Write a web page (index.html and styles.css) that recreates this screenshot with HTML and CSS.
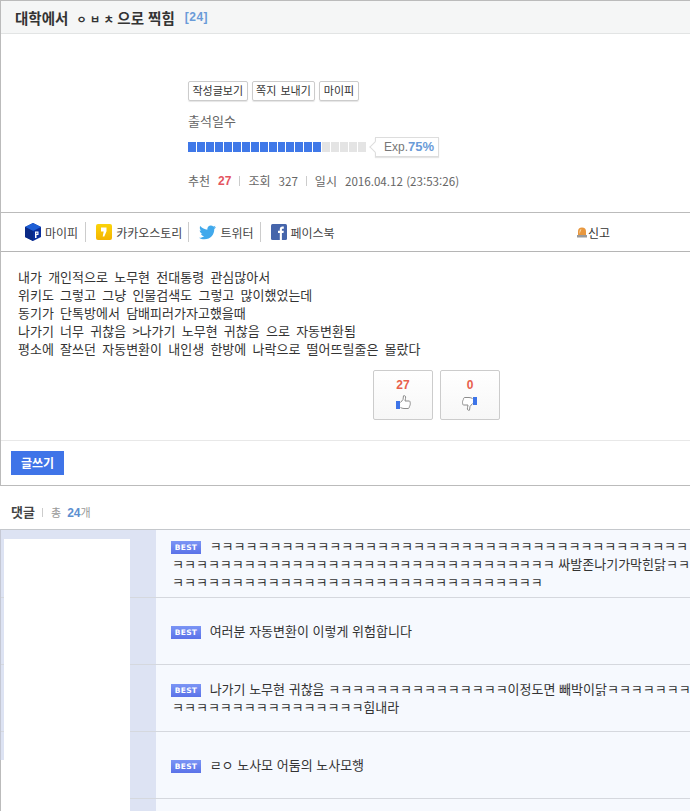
FILE: index.html
```html
<!DOCTYPE html>
<html lang="ko">
<head>
    <meta charset="UTF-8">
    <meta name="viewport" content="width=device-width, initial-scale=1.0">
    <title>대학에서 ㅇㅂㅊ으로 찍힘</title>
    <link rel="stylesheet" href="styles.css">
</head>
<body>
    <div class="post">
        <div class="post-title">
            <h1>대학에서 <span class="jamo">ㅇㅂㅊ</span>으로 찍힘</h1>
            <span class="title-count">[24]</span>
        </div>

        <div class="profile">
            <div class="profile-buttons">
                <a class="small-btn">작성글보기</a>
                <a class="small-btn">쪽지 보내기</a>
                <a class="small-btn">마이피</a>
            </div>
            <div class="attend">출석일수</div>
            <div class="exp-row">
                <div class="exp-bar">
                    <span class="on"></span><span class="on"></span><span class="on"></span><span class="on"></span><span class="on"></span>
                    <span class="on"></span><span class="on"></span><span class="on"></span><span class="on"></span><span class="on"></span>
                    <span class="on"></span><span class="on"></span><span class="on"></span><span class="on"></span><span class="on"></span>
                    <span></span><span></span><span></span><span></span><span></span>
                </div>
                <div class="exp-tip">Exp.<b>75%</b></div>
            </div>
            <div class="post-info">
                <span>추천</span><b class="red">27</b><i></i>
                <span>조회</span><span class="num">327</span><i></i>
                <span>일시</span><span class="num">2016.04.12 (23:53:26)</span>
            </div>
        </div>

        <div class="share-bar">
            <a class="share-item">
                <svg width="16" height="18" viewBox="0 0 16 18"><path d="M8 0l8 4v10l-8 4-8-4V4z" fill="#0a2f9c"/><path d="M8 0l8 4-8 4-8-4z" fill="#1e5fd6"/><path d="M8 8v10l-8-4V4z" fill="#0a2a86"/><path d="M10 8.500h3.500V12h-2v3H10z" fill="#fff"/><rect x="11.300" y="9.700" width="1" height="1.200" fill="#0a2f9c"/></svg>
                마이피
            </a>
            <a class="share-item">
                <svg width="16" height="16" viewBox="0 0 16 16"><defs><linearGradient id="kakaoFill" x1="0" y1="0" x2="0" y2="1"><stop offset="0" stop-color="#fbd40a"/><stop offset="1" stop-color="#f4b400"/></linearGradient></defs><rect width="16" height="16" rx="2" fill="url(#kakaoFill)"/><path d="M5 3.500h5.500v3.800L8.300 12.500H6.700l1-5H5z" fill="#fff"/></svg>
                카카오스토리
            </a>
            <a class="share-item">
                <svg width="17" height="15" viewBox="0 0 18 16"><path d="M18 2.200c-.7.300-1.400.5-2.100.6.800-.5 1.300-1.200 1.600-2-.7.400-1.500.7-2.300.9C14.500 1 13.600.5 12.500.5c-2 0-3.700 1.700-3.700 3.700 0 .3 0 .6.100.8C5.900 4.900 3.200 3.400 1.300 1.100.9 1.700.8 2.300.8 3c0 1.300.6 2.400 1.600 3.100-.6 0-1.200-.2-1.700-.5 0 1.800 1.300 3.300 3 3.700-.6.200-1.100.2-1.700.1.500 1.500 1.800 2.500 3.500 2.600C4 13.100 2 13.800 0 13.600c1.700 1.100 3.600 1.700 5.700 1.700 6.800 0 10.500-5.600 10.500-10.500v-.5c.7-.5 1.300-1.200 1.800-2.100z" fill="#41a9ec"/></svg>
                트위터
            </a>
            <a class="share-item">
                <svg width="16" height="16" viewBox="0 0 16 16"><rect width="16" height="16" rx="1.500" fill="#4565ab"/><path d="M8.800 16V9H7V6.700h1.800V5.200C8.800 3.400 9.900 2.500 11.400 2.500h1.400v2.200h-1c-.7 0-.9.400-.9.900v1.100h1.900L12.500 9h-1.600v7z" fill="#fff"/></svg>
                페이스북
            </a>
            <a class="report">
                <svg width="10" height="11" viewBox="0 0 10 11"><path d="M1 8V4.500a4 4 0 0 1 8 0V8z" fill="#e8973e"/><path d="M2.500 7V4.500A2.500 2.500 0 0 1 4.500 2z" fill="#f8d9a8"/><rect y="8" width="10" height="2.500" fill="#9a9a9a"/></svg>신고
            </a>
        </div>

        <div class="post-body">
            <p>내가 개인적으로 노무현 전대통령 관심많아서</p>
            <p>위키도 그렇고 그냥 인물검색도 그렇고 많이했었는데</p>
            <p>동기가 단톡방에서 담배피러가자고했을때</p>
            <p>나가기 너무 귀찮음 &gt;나가기 노무현 귀찮음 으로 자동변환됨</p>
            <p>평소에 잘쓰던 자동변환이 내인생 한방에 나락으로 떨어뜨릴줄은 몰랐다</p>
            <div class="votes">
                <div class="vote-box">
                    <b>27</b>
                    <svg width="16" height="16" viewBox="0 0 16 16"><rect x="1" y="6" width="4" height="8" fill="#3d74e8"/><path d="M5.500 7.500L8 4.500 8.500.8c1.500-.5 2.500.5 2 2.500L10 6h4c1 0 1.500 1 1 2 .5.500.5 1.500-.2 2 .3.700 0 1.500-.6 1.800.2.800-.2 1.700-1.200 1.700H9c-1.500 0-2.500-.5-3.500-1" fill="#fff" stroke="#8c8c8c"/></svg>
                </div>
                <div class="vote-box">
                    <b>0</b>
                    <svg width="16" height="16" viewBox="0 0 16 16"><rect x="11" y="2" width="4" height="8" fill="#3d74e8"/><path d="M10.500 8.500L8 11.500 7.500 15.200c-1.500.5-2.500-.5-2-2.500L6 10H1.800c-1 0-1.500-1-1-2-.5-.5-.5-1.500.2-2-.3-.7 0-1.500.6-1.800C1.400 3.400 1.800 2.500 2.800 2.500H7c1.500 0 2.500.5 3.500 1" fill="#fff" stroke="#8c8c8c"/></svg>
                </div>
            </div>
        </div>

        <div class="post-foot">
            <a class="write-btn">글쓰기</a>
        </div>
    </div>

    <div class="comment-head">
        <h2>댓글</h2>
        <span class="comment-total">총 <b>24</b>개</span>
    </div>

    <div class="comments">
        <div class="avatar"></div>
        <div class="comment">
            <div class="comment-side"></div>
            <div class="comment-text">
                <div><span class="best">BEST</span> ㅋㅋㅋㅋㅋㅋㅋㅋㅋㅋㅋㅋㅋㅋㅋㅋㅋㅋㅋㅋㅋㅋㅋㅋㅋㅋㅋㅋㅋㅋㅋㅋㅋㅋㅋㅋㅋㅋㅋㅋ<br>ㅋㅋㅋㅋㅋㅋㅋㅋㅋㅋㅋㅋㅋㅋㅋㅋㅋㅋㅋㅋㅋㅋㅋㅋㅋㅋㅋㅋㅋㅋㅋㅋ 싸발존나기가막힌닭ㅋㅋ<br>ㅋㅋㅋㅋㅋㅋㅋㅋㅋㅋㅋㅋㅋㅋㅋㅋㅋㅋㅋㅋㅋㅋㅋㅋㅋㅋㅋㅋㅋㅋㅋ</div>
            </div>
        </div>
        <div class="comment">
            <div class="comment-side"></div>
            <div class="comment-text">
                <div><span class="best">BEST</span> 여러분 자동변환이 이렇게 위험합니다</div>
            </div>
        </div>
        <div class="comment">
            <div class="comment-side"></div>
            <div class="comment-text">
                <div><span class="best">BEST</span> 나가기 노무현 귀찮음 ㅋㅋㅋㅋㅋㅋㅋㅋㅋㅋㅋㅋㅋㅋㅋ이정도면 빼박이닭ㅋㅋㅋㅋㅋㅋㅋ<br>ㅋㅋㅋㅋㅋㅋㅋㅋㅋㅋㅋㅋㅋㅋㅋㅋ힘내라</div>
            </div>
        </div>
        <div class="comment">
            <div class="comment-side"></div>
            <div class="comment-text">
                <div><span class="best">BEST</span> ㄹㅇ 노사모 어둠의 노사모행</div>
            </div>
        </div>
        <div class="comment">
            <div class="comment-side"></div>
            <div class="comment-text"></div>
        </div>
    </div>
</body>
</html>
```

FILE: styles.css
```css
html, body {
    overflow: hidden;
}
body {
    margin: 0;
    width: 690px;
    height: 811px;
    background: #fff;
    color: #333;
    font-family: "Noto Sans CJK KR", "Liberation Sans", sans-serif;
    font-size: 13px;
}
a {
    color: inherit;
    text-decoration: none;
}
.post {
    border-left: 1px solid #bbb;
    border-top: 1px solid #bbb;
    border-bottom: 1px solid #bbb;
    height: 486px;
    box-sizing: border-box;
    display: flex;
    flex-direction: column;
}
.post-title {
    height: 33px;
    box-sizing: border-box;
    background: #f5f6f6;
    border-bottom: 1px solid #e2e4e4;
    display: flex;
    align-items: center;
    padding-left: 14px;
    gap: 10px;
}
h1 {
    margin: 0;
    font-size: 14.5px;
    font-weight: bold;
    color: #333;
}
.jamo {
    font-size: 11px;
    letter-spacing: 3.5px;
    margin-left: 4px;
}
.title-count {
    font-size: 12px;
    font-weight: bold;
    color: #6a9bd8;
    font-family: "Liberation Sans", sans-serif;
    letter-spacing: 0.5px;
}
.profile {
    height: 178px;
    box-sizing: border-box;
    padding: 47px 0 0 187px;
    color: #666;
}
.profile-buttons {
    display: flex;
    gap: 4px;
}
.small-btn {
    height: 20px;
    box-sizing: border-box;
    border: 1px solid #ccc;
    border-radius: 2px;
    padding: 0 3.5px;
    font-size: 11px;
    line-height: 17px;
    color: #333;
    word-spacing: 1px;
    box-shadow: 0 1px 1px #e5e5e5;
}
.attend {
    margin-top: 11px;
    height: 18px;
    line-height: 18px;
    word-spacing: 2.6px;
}
.exp-row {
    display: flex;
    align-items: center;
    margin-top: 7px;
}
.exp-bar {
    display: flex;
    gap: 1px;
    width: 178px;
}
.exp-bar span {
    flex: 1;
    height: 10px;
    background: #e4e4e4;
}
.exp-bar span.on {
    background: #3f78e8;
}
.exp-tip {
    position: relative;
    margin-left: 9px;
    height: 20px;
    box-sizing: border-box;
    border: 1px solid #ddd;
    box-shadow: 0 1px 1px #e5e5e5;
    padding: 0 4px 0 8px;
    line-height: 18px;
    font-size: 12px;
    color: #777;
    font-family: "Liberation Sans", sans-serif;
}
.exp-tip b {
    color: #6a9bd8;
    font-size: 13px;
}
.exp-tip::before {
    content: "";
    position: absolute;
    left: -5px;
    top: 5px;
    width: 7px;
    height: 7px;
    background: #fff;
    border-left: 1px solid #ddd;
    border-bottom: 1px solid #ddd;
    transform: rotate(45deg);
}
.post-info {
    display: flex;
    align-items: center;
    gap: 8px;
    margin-top: 15px;
    font-size: 12px;
    color: #666;
}
.post-info b {
    font-family: "Liberation Sans", sans-serif;
}
.post-info i {
    width: 1px;
    height: 10px;
    background: #ccc;
}
.post-info .num {
    font-size: 11.6px;
}
.red {
    color: #e4555f;
}
.share-bar {
    height: 40px;
    box-sizing: border-box;
    border-top: 1px solid #bbb;
    border-bottom: 1px solid #b5b5b5;
    display: flex;
    align-items: center;
    padding-left: 24px;
    font-size: 12px;
    color: #444;
}
.share-item {
    display: flex;
    align-items: center;
    gap: 4px;
    height: 20px;
    padding-right: 6px;
    margin-right: 10px;
    border-right: 1px solid #ccc;
}
.share-item:first-child {
    padding-right: 7px;
}
.share-item:nth-child(4) {
    border-right: 0;
}
.report {
    margin-left: auto;
    margin-right: 80px;
    display: flex;
    align-items: center;
    gap: 1px;
    color: #333;
}
.post-body {
    flex: 1;
    padding: 16px 0 0 17px;
    border-bottom: 1px solid #e8e8e8;
    color: #333;
    word-spacing: 2.6px;
}
.post-body p {
    margin: 0;
    height: 18px;
    line-height: 18px;
}
.votes {
    display: flex;
    gap: 7px;
    margin: 12px 0 0 355px;
}
.vote-box {
    width: 60px;
    height: 50px;
    box-sizing: border-box;
    border: 1px solid #ccc;
    border-radius: 2px;
    background: linear-gradient(#fff, #f7f7f7);
    display: flex;
    flex-direction: column;
    align-items: center;
    padding-top: 7px;
    gap: 3px;
}
.vote-box b {
    font-size: 12px;
    line-height: 14px;
    color: #e8604c;
    font-family: "Liberation Sans", sans-serif;
}
.post-foot {
    height: 44px;
    box-sizing: border-box;
    padding: 10px 0 0 10px;
}
.write-btn {
    display: block;
    width: 53px;
    height: 24px;
    background: #3f74e8;
    color: #fff;
    text-align: center;
    font-size: 12px;
    font-weight: bold;
    line-height: 23px;
}
.comment-head {
    height: 43px;
    display: flex;
    align-items: center;
    padding: 8px 0 0 11px;
    box-sizing: border-box;
}
h2 {
    margin: 0;
    padding-right: 8px;
    margin-right: 8px;
    font-size: 13px;
    font-weight: bold;
    color: #444;
    position: relative;
}
h2::after {
    content: "";
    position: absolute;
    right: 0;
    top: 6px;
    width: 1px;
    height: 9px;
    background: #ccc;
}
.comment-total {
    font-size: 11px;
    color: #999;
    word-spacing: 3px;
}
.comment-total b {
    color: #5c8fd0;
    font-size: 12px;
    font-family: "Liberation Sans", sans-serif;
}
.comments {
    position: relative;
    border-top: 1px solid #c5c8cc;
    border-left: 1px solid #c5c8d4;
}
.avatar {
    position: absolute;
    left: 3px;
    top: 9px;
    width: 126px;
    height: 272px;
    background: #fff;
}
.avatar::before {
    content: "";
    position: absolute;
    left: -4px;
    top: 221px;
    bottom: 0;
    width: 3px;
    background: #fff;
    border-left: 1px solid #bbb;
}
.comment {
    display: flex;
    height: 67px;
    box-sizing: border-box;
    border-bottom: 1px solid #d5d8de;
    background: #dde3f3;
}
.comment:nth-child(2) {
    height: 68px;
}
.comment:last-child {
    height: 12px;
    border-bottom: 0;
}
.comment-side {
    width: 155px;
    flex: none;
}
.comment-text {
    flex: 1;
    display: flex;
    align-items: center;
    white-space: nowrap;
    overflow: hidden;
    background: #f6f9fe;
    padding-left: 16px;
    line-height: 18px;
    color: #333;
}
.best {
    display: inline-block;
    width: 30px;
    height: 13px;
    margin: 0 5px 0 -1px;
    vertical-align: 1px;
    background: linear-gradient(#7b95f5, #5a72e8);
    color: #fff;
    font-family: "DejaVu Sans", sans-serif;
    font-size: 7.5px;
    font-weight: bold;
    line-height: 13px;
    text-align: center;
    letter-spacing: 0.3px;
}
```
